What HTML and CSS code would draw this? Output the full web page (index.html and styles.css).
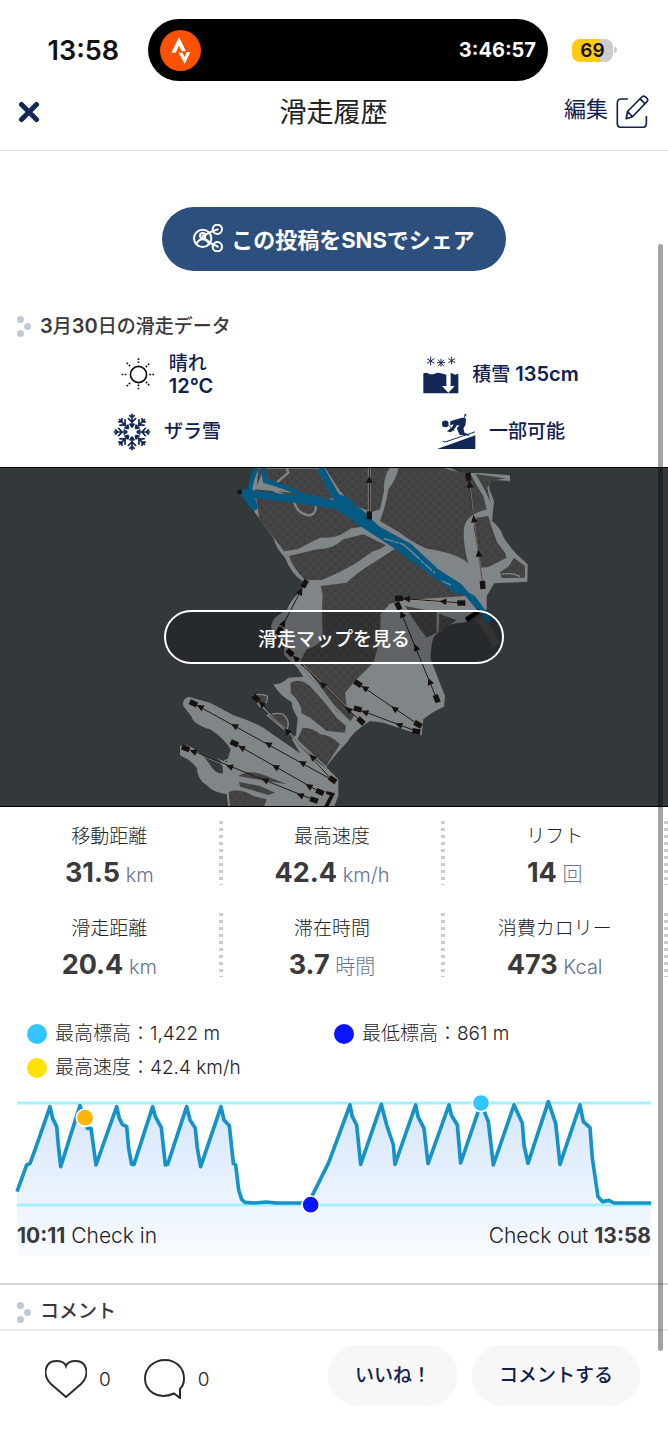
FILE: index.html
```html
<!DOCTYPE html>
<html lang="ja">
<head>
<meta charset="utf-8">
<meta name="viewport" content="width=device-width, initial-scale=1">
<title>滑走履歴</title>
<link rel="stylesheet" href="styles.css">
</head>
<body>
<div class="screen">
  <div class="status">
    <time class="clock">13:58</time>
    <div class="island">
      <svg class="activity" viewBox="0 0 123 123" aria-hidden="true">
        <circle cx="61.500" cy="61.500" r="61.500" fill="#fc5200"/>
        <path d="M34 68 57 21 78 64H65L57 47 47 68Z" fill="#fff"/>
        <path d="M56 68H67L74 81 80 66H91L74 102Z" fill="#fff"/>
      </svg>
      <span class="timer">3:46:57</span>
    </div>
    <div class="battery"><span class="level">69</span><span class="cap"></span></div>
  </div>

  <header class="header">
    <button class="close" type="button" aria-label="閉じる">
      <svg viewBox="0 0 22 22" aria-hidden="true"><path d="M3.500 3.500 18.500 18.500M18.500 3.500 3.500 18.500"/></svg>
    </button>
    <h1 class="title">滑走履歴</h1>
    <button class="edit" type="button">編集
      <svg viewBox="0 0 100 100" aria-hidden="true"><path d="M36 12H16Q4 12 4 24V86Q4 98 16 98H80Q92 98 92 86V64M31 72 35 50 78 6Q84 0 91 7L94 10Q99 16 93 21L50 66ZM35 50 50 66M73 11 88 27"/></svg>
    </button>
  </header>

  <main>
    <button class="share" type="button">
      <svg viewBox="0 0 90 84" aria-hidden="true">
        <circle cx="29" cy="43" r="26"/><circle cx="29" cy="35" r="8"/><path d="M11 59Q17 46 29 46T47 59M29 36 62 20M35 44 62 64"/>
        <circle cx="73" cy="16" r="14"/><circle cx="73" cy="68" r="14"/><path d="M58 22 74 16M60 60 74 68"/>
      </svg>
      この投稿をSNSでシェア
    </button>

    <h2 class="heading"><svg viewBox="0 0 14 21" aria-hidden="true"><circle cx="3.500" cy="3.500" r="3.500"/><circle cx="10.500" cy="10.500" r="3.500"/><circle cx="3.500" cy="17.500" r="3.500"/></svg><span><b>3</b>月<b>30</b>日の滑走データ</span></h2>

    <div class="conditions">
      <div class="condition">
        <svg class="sun" viewBox="0 0 104 104" aria-hidden="true"><circle cx="52" cy="52" r="24"/>
          <path class="rays" d="M52 4V22M52 82V100M2 52H20M84 52H102M17 17 30 30M74 74 87 87M17 87 30 74M74 30 87 17"/></svg>
        <div class="weather"><span>晴れ</span><b>12°C</b></div>
      </div>
      <div class="condition">
        <svg class="depth" viewBox="0 0 108 114" aria-hidden="true">
          <path class="flakes" d="M23 2V28M12 8 34 22M34 8 12 22M54 8V32M42 20H66M45 11 63 31M63 11 45 31M86 2V25M76 8 96 20M96 8 76 20"/>
          <path d="M1 52Q10 48 17 53 27 56 35 53 46 48 54 52L70 56V90H57L76 110 95 90H83V50L96 56 106 53V112H1Z"/>
        </svg>
        <span>積雪 <b>135cm</b></span>
      </div>
      <div class="condition">
        <svg class="flake" viewBox="0 0 112 112" aria-hidden="true">
          <defs><path id="arm" d="M56 42V2M56 27 44 15M56 27 68 15M56 14 48 6M56 14 64 6M56 42 49 31M56 42 63 31"/></defs>
          <use href="#arm"/><use href="#arm" transform="rotate(45 56 56)"/><use href="#arm" transform="rotate(90 56 56)"/><use href="#arm" transform="rotate(135 56 56)"/>
          <use href="#arm" transform="rotate(180 56 56)"/><use href="#arm" transform="rotate(225 56 56)"/><use href="#arm" transform="rotate(270 56 56)"/><use href="#arm" transform="rotate(315 56 56)"/>
        </svg>
        <span>ザラ雪</span>
      </div>
      <div class="condition">
        <svg class="skier" viewBox="0 0 118 110" aria-hidden="true">
          <circle cx="25" cy="33" r="10"/>
          <path d="M40 25 75 14 88 17 86 36 80 46 83 60 98 66 98 69 68 66 60 46 68 38 60 37 52 50 42 58 30 55 46 42 50 34 40 37Z"/>
          <path d="M0 109 116 67V109Z"/>
          <path class="thin" d="M17 84Q20 91 30 86L115 57M81 16 88 2M82 5 89 9M35 37 52 54"/>
        </svg>
        <span>一部可能</span>
      </div>
    </div>

    <section class="map" aria-label="滑走マップ">
      <svg class="terrain" viewBox="-480 3 2004 1020" preserveAspectRatio="xMidYMid slice" aria-hidden="true">
        <defs>
          <pattern id="trees" width="26" height="26" patternUnits="userSpaceOnUse"><rect width="26" height="26" fill="#444"/><path d="M6 2 11 12H1ZM19 15 24 25H14Z" fill="#3a3a3a"/></pattern>
          <path id="tip" d="M-4 0 17-10V10Z"/>
          <rect id="station" x="-12" y="-8" width="24" height="16"/>
        </defs>
        <g class="piste">
          <path d="M290 3 272 62Q262 95 285 140L340 215Q350 250 375 275 395 325 427 345L424 375Q390 400 380 435 335 450 333 485 345 518 385 528 365 550 375 570 400 590 412 605L430 632 385 635Q365 655 340 655 360 690 395 708 395 730 413 755L408 808 395 818 425 870 497 905Q530 860 562 828 575 800 630 765L670 770 715 785 785 808 790 760Q815 738 852 722L855 690 812 580Q812 540 820 515 840 485 880 473L920 468 980 430 980 390 1003 352 1102 347 1103 295 1070 265Q1040 230 1030 212 1022 185 996 165L1002 105 988 70Q985 45 1000 42L1050 45V28L970 22 900 20 865 3Z"/>
          <path d="M85 692 150 710Q190 730 220 748 275 765 310 785L420 862 500 905 535 940V990L522 1023H205L200 985Q160 980 140 958 112 940 110 905 90 880 60 868V840Q85 832 110 855 135 872 155 903 170 925 188 922 192 890 170 875L200 890 212 850Q190 815 150 790 100 775 95 752L70 720Q65 700 85 692Z"/>
        </g>
        <g class="forest">
          <path d="M285 70 500 90 555 140 625 165Q635 182 575 186L545 205Q520 218 480 215 440 235 412 250L372 256 345 220 298 160Z"/>
          <path d="M295 8H470L520 98Q430 90 350 62L325 48 312 8 290 60Z"/>
          <path d="M540 5H690Q670 30 672 75 665 110 660 130L635 138 580 118 540 75 495 5Z"/>
          <path d="M715 5H850Q890 20 930 22 950 60 970 90L980 130Q920 145 912 185 908 235 925 292 890 260 800 248 750 225 720 200L660 165Q680 110 685 70 712 35 715 5Z"/>
          <path d="M946 24 1035 37 995 46 982 65 992 110Q970 60 946 24ZM985 150 997 190 1012 230 1035 260 1040 275 985 303 965 305 942 190 950 155ZM1062 275 1095 300V335L1025 336 1020 318 1045 302Z"/>
          <path d="M387 270 470 250Q520 250 550 220L610 205 678 238Q660 252 640 255L590 290 540 318 485 342 435 343Q395 300 387 270Z"/>
          <path d="M482 360 560 350Q590 320 640 290L705 248 890 365 917 390 735 402 690 415 662 445 660 520 640 590 590 640 555 680 560 720 582 750 570 768 528 735 485 680 418 590 440 550Q480 540 488 510 485 420 488 385Z"/>
          <path d="M735 420 830 438V500L800 515Q775 485 735 420ZM838 443 890 463 855 485 835 512Z"/>
          <path d="M392 650Q420 635 450 660L495 710 530 755 558 780 555 800 500 795 450 755 425 742Q425 710 392 680ZM428 785Q460 785 480 805 510 805 540 835L495 905 462 880 412 820Z"/>
          <path d="M206 978Q240 965 280 990L320 1000 312 1022H210ZM235 930Q270 908 320 930L380 955 290 940ZM237 948 300 960 345 980 325 987 240 962Z"/>
        </g>
        <path d="M940 460 972 450 1022 532 997 545Q985 500 940 460Z" fill="#444"/>
        <path class="trail" d="M380 5 385 20 350 50 345 75 390 95 405 115Q415 145 450 148 470 142 467 118M430 600 520 720 570 770"/>
        <path class="trail loop" d="M278 690Q300 680 322 690 325 715 300 722ZM322 748Q350 738 370 745 395 770 378 795Z"/>
        <path class="trail inset" d="M662 450 690 415 740 405M660 510Q695 465 725 470L710 490M190 888Q205 875 232 878M1025 325Q1060 318 1080 332M385 540Q410 545 412 575 400 600 385 575 370 560 385 540M300 715 410 822 500 905"/>
        <g class="route">
          <path class="wide" d="M245 80 390 98 530 118 620 180 700 232 800 305 900 378M480 5 530 95 600 140 650 190M255 82 282 122 270 85"/>
          <path d="M290 5Q270 45 270 80L280 125M310 5 315 45Q390 65 430 90L530 112M530 90 560 100 590 135 650 185 750 240 830 315 900 360 990 467M640 180 700 215 760 275 860 350 940 395 988 462"/>
        </g>
        <path class="gap" d="M672 218 730 235 790 290 825 322M845 345 875 358"/>
        <path d="M915 455 955 428 962 440 922 468Z"/>
        <g class="lift">
          <path d="M434 353 358 497M390 560 562 730 603 765M287 695 517 942M100 712 517 942M223 832 480 978M77 847 462 1002M628 5V148M925 32 968 357M717 397 904 411M715 420 830 698M594 653 774 775M594 730 770 796M500 1015 520 985"/>
        </g>
        <g class="lift-glow"><path d="M402 567 562 725M85 852 210 905M625 5V145M631 5V145M929 50 966 350M740 402 900 414M305 718 517 938"/></g>
        <g class="marks">
          <use href="#station" transform="translate(434 353) rotate(-62)"/><use href="#station" transform="translate(358 495) rotate(-62)"/><use href="#station" transform="translate(390 560) rotate(42)"/><use href="#station" transform="translate(603 765) rotate(42)"/><use href="#station" transform="translate(288 697) rotate(45)"/><use href="#station" transform="translate(518 941) rotate(35)"/><use href="#station" transform="translate(100 712) rotate(25)"/><use href="#station" transform="translate(223 832) rotate(25)"/><use href="#station" transform="translate(77 847) rotate(20)"/><use href="#station" transform="translate(480 978) rotate(25)"/><use href="#station" transform="translate(462 1002) rotate(18)"/><use href="#station" transform="translate(628 148) rotate(90)"/><use href="#station" transform="translate(925 32) rotate(85)"/><use href="#station" transform="translate(968 357) rotate(85)"/><use href="#station" transform="translate(717 397)"/><use href="#station" transform="translate(904 411)"/><use href="#station" transform="translate(715 420) rotate(65)"/><use href="#station" transform="translate(830 698) rotate(68)"/><use href="#station" transform="translate(594 653) rotate(33)"/><use href="#station" transform="translate(774 775) rotate(30)"/><use href="#station" transform="translate(593 729) rotate(15)"/><use href="#station" transform="translate(769 796) rotate(10)"/><path d="M233 71H245V84H233ZM499 975 525 982 505 1022H492L510 988 498 984Z"/>
          <use href="#tip" transform="translate(425 370) rotate(118)"/><use href="#tip" transform="translate(374 465) rotate(118)"/><use href="#tip" transform="translate(402 572) rotate(44)"/><use href="#tip" transform="translate(482 650) rotate(44)"/><use href="#tip" transform="translate(560 725) rotate(44)"/><use href="#tip" transform="translate(300 708) rotate(47)"/><use href="#tip" transform="translate(376 790) rotate(47)"/><use href="#tip" transform="translate(452 868) rotate(47)"/><use href="#tip" transform="translate(114 719) rotate(28)"/><use href="#tip" transform="translate(217 776) rotate(28)"/><use href="#tip" transform="translate(318 831) rotate(28)"/><use href="#tip" transform="translate(420 887) rotate(28)"/><use href="#tip" transform="translate(238 841) rotate(29)"/><use href="#tip" transform="translate(340 899) rotate(29)"/><use href="#tip" transform="translate(440 957) rotate(29)"/><use href="#tip" transform="translate(93 854) rotate(21)"/><use href="#tip" transform="translate(202 899) rotate(21)"/><use href="#tip" transform="translate(308 940) rotate(21)"/><use href="#tip" transform="translate(414 985) rotate(21)"/><use href="#tip" transform="translate(628 33) rotate(90)"/><use href="#tip" transform="translate(928 48) rotate(83)"/><use href="#tip" transform="translate(941 152) rotate(83)"/><use href="#tip" transform="translate(955 255) rotate(83)"/><use href="#tip" transform="translate(733 398) rotate(4)"/><use href="#tip" transform="translate(842 406) rotate(4)"/><use href="#tip" transform="translate(723 438) rotate(67)"/><use href="#tip" transform="translate(765 538) rotate(67)"/><use href="#tip" transform="translate(806 640) rotate(67)"/><use href="#tip" transform="translate(608 662) rotate(34)"/><use href="#tip" transform="translate(697 724) rotate(34)"/><use href="#tip" transform="translate(608 736) rotate(20)"/><use href="#tip" transform="translate(710 774) rotate(20)"/>
        </g>
      </svg>
      <button class="map-open" type="button">滑走マップを見る</button>
    </section>

    <dl class="stats">
      <div class="stat"><dt>移動距離</dt><dd><b>31.5</b> km</dd></div>
      <div class="stat"><dt>最高速度</dt><dd><b>42.4</b> km/h</dd></div>
      <div class="stat"><dt>リフト</dt><dd><b>14</b> 回</dd></div>
      <div class="stat"><dt>滑走距離</dt><dd><b>20.4</b> km</dd></div>
      <div class="stat"><dt>滞在時間</dt><dd><b>3.7</b> 時間</dd></div>
      <div class="stat"><dt>消費カロリー</dt><dd><b>473</b> Kcal</dd></div>
    </dl>

    <ul class="legend">
      <li class="highest">最高標高：1,422 m</li>
      <li class="lowest">最低標高：861 m</li>
      <li class="fastest">最高速度：42.4 km/h</li>
    </ul>

    <figure class="chart">
      <svg viewBox="51 0 1902 513" preserveAspectRatio="none" aria-hidden="true">
        <defs><linearGradient id="sky" x1="0" y1="0" x2="0" y2="1"><stop offset="0" stop-color="#d5e6fc"/><stop offset=".65" stop-color="#edf4fe"/><stop offset="1" stop-color="#f8fbff"/></linearGradient></defs>
        <path fill="url(#sky)" d="M51 320 80 240 90 235 105 195 150 65 170 125 182 245 240 62 262 130 273 130 288 240 350 65 367 118 380 125 395 238 402 238 458 65 466 95 484 128 496 240 503 238 560 65 570 105 586 130 602 245 663 65 672 105 688 122 700 235 707 240 720 330 735 352 905 354 930 345 985 235 1002 190 1050 60 1070 120 1082 238 1144 58 1185 238 1247 60 1272 130 1284 236 1347 60 1372 120 1382 234 1443 55 1465 110 1480 240 1542 60 1567 115 1577 200 1584 235 1645 50 1667 115 1680 238 1740 60 1755 115 1770 128 1777 220 1794 340 1807 350 1827 346 1842 354 1953 354V513H51Z"/>
        <path class="limit" d="M51 54H1953M51 360H1953"/>
        <path class="profile" d="M51 320 80 240 90 235 105 195 150 65 158 100 170 125 175 180 182 245 240 62 262 130 273 130 288 240 350 65 358 100 367 118 380 125 386 190 395 238 402 238 458 65 466 95 484 128 496 240 503 238 560 65 570 105 586 130 592 190 602 245 663 65 672 105 688 122 700 235 707 240 716 315 725 343 735 352 765 354 798 351 830 354 905 354 930 345 985 235 1002 190 1050 60 1057 95 1070 120 1082 238 1144 58 1160 120 1180 180 1185 238 1247 60 1254 95 1272 130 1284 236 1347 60 1354 90 1372 120 1382 234 1443 55 1465 110 1480 240 1542 60 1567 115 1572 180 1584 235 1645 50 1667 115 1680 238 1740 60 1750 110 1770 128 1777 220 1794 335 1807 350 1827 346 1842 354 1953 354"/>
        <g class="points"><circle cx="255" cy="98" r="26" fill="#fdb50a"/><circle cx="932" cy="359" r="26" fill="#0a14ff"/><circle cx="1443" cy="54" r="26" fill="#32c5ff"/></g>
      </svg>
      <figcaption><span><b>10:11</b> Check in</span><span>Check out <b>13:58</b></span></figcaption>
    </figure>

    <h2 class="heading comments"><svg viewBox="0 0 14 21" aria-hidden="true"><circle cx="3.500" cy="3.500" r="3.500"/><circle cx="10.500" cy="10.500" r="3.500"/><circle cx="3.500" cy="17.500" r="3.500"/></svg>コメント</h2>
  </main>

  <footer class="actions">
    <span class="count"><svg viewBox="0 0 42 40" aria-hidden="true"><path d="M21 38 6 25C-4 15 1 2 11 2 16 2 20 4 21 7 22 4 26 2 31 2 41 2 46 15 36 25Z"/></svg>0</span>
    <span class="count"><svg viewBox="0 0 42 40" aria-hidden="true"><path d="M30 34.500C13 42 1 31 1 19.500 1 9 10 1 21 1S40 9 40 19.500C40 24 38 28 36 30V39Z"/></svg>0</span>
    <button class="pill like" type="button">いいね！</button>
    <button class="pill" type="button">コメントする</button>
  </footer>
  <div class="scrollbar"></div>
</div>
</body>
</html>
```

FILE: styles.css
```css
* { box-sizing: border-box; }

body {
  margin: 0;
  background: #fff;
  color: #222;
  font-family: Inter, "Noto Sans CJK JP", sans-serif;
  font-size: 19px;
}

button {
  border: 0;
  padding: 0;
  background: none;
  color: inherit;
  font: inherit;
}

svg { display: block; flex: none; }

.screen {
  position: relative;
  min-height: 100vh;
  display: flex;
  flex-direction: column;
}

/* Status bar */
.status {
  display: grid;
  grid-template-columns: 148px 1fr 120px;
  align-items: center;
  padding-top: 19px;
}
.clock { justify-self: end; margin-right: 29px; font-size: 27px; font-weight: 600; color: #111; }
.island {
  display: flex;
  align-items: center;
  justify-content: space-between;
  height: 62px;
  padding: 0 12px;
  border-radius: 31px;
  background: #000;
  color: #fff;
}
.activity { width: 41px; }
.timer { font-size: 20px; font-weight: 700; }
.battery { display: flex; align-items: center; gap: 1px; margin-left: 24px; }
.level {
  width: 41px;
  border-radius: 8px;
  background: linear-gradient(90deg, #ffcb0b 69%, #ccc 69%);
  color: #111;
  font-size: 19px;
  font-weight: 600;
  line-height: 23px;
  text-align: center;
}
.cap { width: 3px; height: 6px; border-radius: 0 3px 3px 0; background: #ccc; }

/* Header */
.header {
  display: grid;
  grid-template-columns: 1fr auto 1fr;
  align-items: center;
  height: 70px;
  padding: 0 19px 8px 18px;
  border-bottom: 1px solid #ddd;
}
.close { justify-self: start; }
.close svg { width: 22px; fill: none; stroke: #132856; stroke-width: 5; stroke-linecap: round; }
.title { margin: 0; padding-top: 3px; font-size: 27px; font-weight: 400; line-height: 40px; }
.edit { display: flex; align-items: flex-start; gap: 8px; justify-self: end; color: #10204f; font-size: 22px; line-height: 28px; }
.edit svg { width: 33px; fill: none; stroke: #10204f; stroke-width: 5; stroke-linejoin: round; }

main { display: flex; flex-direction: column; padding-top: 56px; }

.share {
  display: flex;
  align-items: center;
  justify-content: center;
  gap: 8px;
  align-self: center;
  width: 344px;
  height: 64px;
  padding-bottom: 2px;
  border-radius: 32px;
  background: #2d4f7d;
  color: #fff;
  font-size: 22px;
  font-weight: 700;
}
.share svg { width: 30px; fill: none; stroke: #fff; stroke-width: 6; stroke-linecap: round; }

.heading {
  display: flex;
  align-items: center;
  gap: 9px;
  margin: 40px 0 4px;
  padding: 0 17px;
  color: #3a3a3a;
  font-size: 19px;
  font-weight: 500;
  line-height: 30px;
}
.heading b { font-size: 20px; font-weight: 600; }
.heading svg { width: 14px; fill: #c0c8d6; }

/* Snow and weather */
.conditions {
  display: grid;
  grid-template-columns: 1fr 1fr;
  grid-auto-rows: 57px;
  margin-bottom: 7px;
  color: #10204f;
  font-weight: 500;
  line-height: 20px;
}
.conditions b { font-size: 20px; font-weight: 600; }
.weather { display: grid; line-height: 22px; }
.condition { display: flex; align-items: center; justify-content: center; gap: 13px; }
.condition svg { fill: #132856; stroke: #132856; stroke-width: 0; }
.condition .sun { width: 35px; fill: none; stroke: #111; stroke-width: 5; }
.rays { stroke-dasharray: 5 4; }
.condition .depth { width: 36px; }
.condition .flakes { fill: none; stroke-width: 3; }
.condition .flake { width: 38px; fill: none; stroke-width: 5; }
.condition .skier { width: 39px; }
.thin { fill: none; stroke-width: 3; }

/* Course map */
.map {
  display: grid;
  place-items: center;
  height: 340px;
  border-block: 1px solid #000;
  background: #33383b;
}
.map > * { grid-area: 1 / 1; }
.terrain { width: 100%; height: 338px; }
.piste { fill: #808587; }
.forest { fill: url(#trees); }
.trail { fill: none; stroke: #808587; stroke-width: 7; }
.loop { fill: #444; stroke-width: 4; }
.inset { stroke-width: 4; }
.route { fill: none; stroke: #055a84; stroke-width: 14; stroke-linejoin: round; }
.wide { stroke-width: 22; }
.gap { fill: none; stroke: #808587; stroke-width: 4; stroke-dasharray: 30 4 12 3; }
.lift { fill: none; stroke: #231815; stroke-width: 3; }
.lift-glow { fill: none; stroke: #9a9088; stroke-width: 2; }
.marks { fill: #17110f; }
.map-open {
  width: 340px;
  height: 54px;
  border: 2px solid #fff;
  border-radius: 27px;
  background: rgb(0 0 0 / 25%);
  color: #fff;
  font-weight: 500;
}

/* Figures */
.stats {
  display: grid;
  grid-template-columns: repeat(3, 1fr);
  row-gap: 28px;
  margin: 0;
  padding-top: 14px;
}
.stat {
  height: 64px;
  padding-right: 4px;
  background: linear-gradient(#ccc 3px, transparent 3px) right top / 4px 7px repeat-y;
  text-align: center;
}
.stat dt { font-weight: 300; line-height: 32px; }
.stat dd { margin: 4px 0 0; color: #66748f; font-size: 20px; font-weight: 300; line-height: 32px; }
.stat b { color: #3a3a3a; font-size: 27px; font-weight: 700; }

.legend {
  display: grid;
  grid-template-columns: 1fr 1fr;
  margin: 40px 0 0;
  padding: 0 27px;
  list-style: none;
  font-weight: 300;
  line-height: 34px;
}
.legend li { display: flex; align-items: center; gap: 8px; }
.legend li::before { content: ""; width: 20px; height: 20px; border-radius: 50%; background: #32c5ff; }
.legend .lowest::before { background: #0a14ff; }
.legend .fastest::before { background: #ffe100; }

.chart { display: grid; margin: 0 17px 27px; }
.chart > * { grid-area: 1 / 1; }
.chart svg { width: 100%; height: 171px; overflow: visible; }
.limit { stroke: #a5f0ff; stroke-width: 9; }
.profile { fill: none; stroke: #1593c8; stroke-width: 11; stroke-linejoin: round; }
.points { stroke: #fff; stroke-width: 5; }
.chart figcaption {
  display: flex;
  justify-content: space-between;
  align-self: end;
  font-size: 21px;
  font-weight: 300;
  line-height: 40px;
}
.chart b { font-weight: 700; color: #3a3a3a; }

.comments { margin: 0; padding-block: 12px 2px; border-top: 2px solid #d5d5d5; }

/* Bottom bar */
.actions {
  display: flex;
  align-items: flex-start;
  flex: 1;
  padding: 14px 28px 34px 45px;
  border-top: 2px solid #e8ecf2;
}
.count { display: flex; align-items: center; gap: 12px; height: 68px; margin-right: 33px; font-weight: 300; }
.count svg { width: 42px; fill: none; stroke: #2b2b2b; stroke-width: 2; }
.pill { height: 61px; padding: 0 27px 4px; border-radius: 31px; background: #f7f7f7; color: #10204f; font-weight: 500; }
.like { margin: 0 14px 0 auto; }

.scrollbar {
  position: absolute;
  top: 244px;
  right: 5px;
  bottom: 97px;
  width: 5px;
  border-radius: 3px;
  background: rgb(0 0 0 / 36%);
}
```
